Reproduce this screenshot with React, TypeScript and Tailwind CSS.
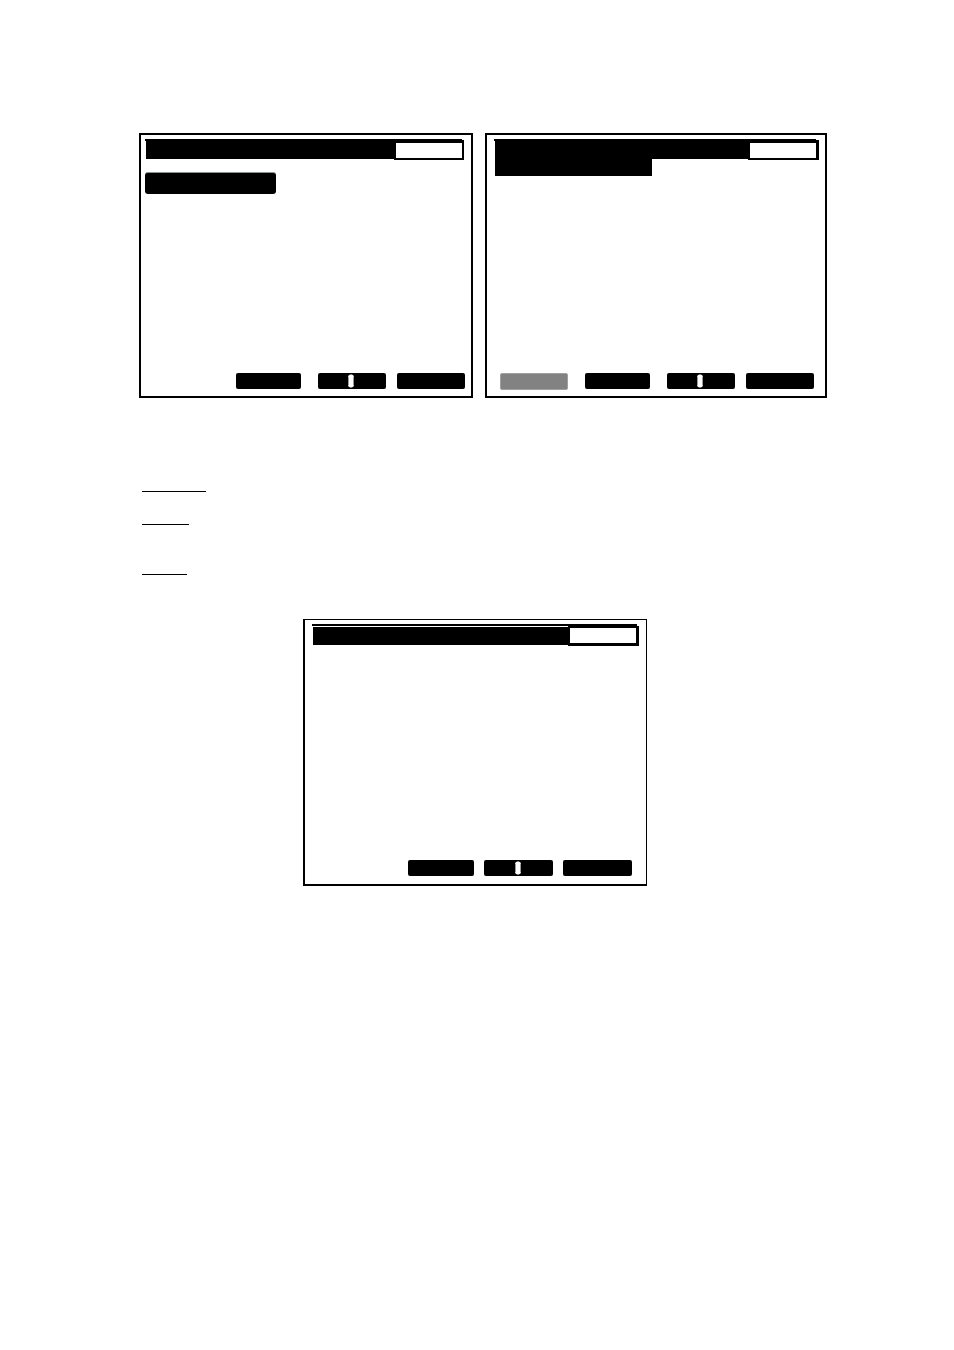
import clsx from "clsx";

type Softkey = {
    label: string;
    className: string;
    slot?: boolean;
    disabled?: boolean;
};

const mainKeys: Softkey[] = [
    { label: "Back", className: "w-[65px] mr-[17px]" },
    { label: "Scroll", className: "w-[68px] mr-[11px]", slot: true },
    { label: "Next", className: "w-[68px]" },
];

const detailKeys: Softkey[] = [
    { label: "Option", className: "w-[68px] mr-[17px]", disabled: true },
    { label: "Back", className: "w-[65px] mr-[17px]" },
    { label: "Scroll", className: "w-[68px] mr-[11px]", slot: true },
    { label: "Next", className: "w-[68px]" },
];

const summaryKeys: Softkey[] = [
    { label: "Back", className: "w-[66px] mr-[10px]" },
    { label: "Scroll", className: "w-[69px] mr-[10px]", slot: true },
    { label: "Next", className: "w-[69px]" },
];

const sections = [
    { id: "first", className: "w-16" },
    { id: "second", className: "w-[47px] mt-8" },
    { id: "third", className: "w-[45px] mt-[49px]" },
];

const Softkeys = ({ keys, className }: { keys: Softkey[]; className: string }) => (
    <div className={clsx("flex justify-end items-start h-4 mt-auto", className)}>
        {keys.map((key) => (
            <button
                key={key.label}
                type="button"
                aria-label={key.label}
                disabled={key.disabled}
                className={clsx(
                    "rounded-[2px] flex items-center justify-center",
                    key.disabled ? "h-[17px] bg-[#828282] border border-[#a0a0a0]" : "h-4 bg-black",
                    key.className
                )}
            >
                {key.slot && (
                    <svg width="6" height="14" viewBox="0 0 6 14" className="mr-[2px]">
                        <path d="M0 2 L2 0.5 H4 L6 2 L5.6 3 V11 L6 12 L4 13.5 H2 L0 12 L0.4 11 V3 Z" fill="white" />
                    </svg>
                )}
            </button>
        ))}
    </div>
);

const App = () => {
    return (
        <main className="min-h-screen bg-white pt-[133px] pl-[139px] pr-[127px]">
            {/* Two screens side by side */}
            <div className="grid grid-cols-[334fr_342fr] gap-3">
                <section className="flex flex-col min-h-[265px] border-2 border-black">
                    <div className="mt-1 ml-1 mr-[9px] h-[2px] bg-black" />
                    <div className="flex items-start -mt-px ml-[5px] mr-[7px]">
                        <div className="flex-1 h-[19px] bg-black" />
                        <div className="w-[70px] h-5 bg-white border-2 border-t-[3px] border-black" />
                    </div>
                    <div className="mt-3 ml-1 w-[131px] h-[22px] rounded-[3px] bg-black border-t border-[#8c9490]" />
                    <Softkeys keys={mainKeys} className="mb-[7px] mr-[6px]" />
                </section>

                <section className="flex flex-col min-h-[265px] border-2 border-black">
                    <div className="mt-1 ml-[7px] mr-[9px] h-[2px] bg-black" />
                    <div className="flex items-start -mt-px ml-2 mr-[6px]">
                        <div className="flex-1 h-[19px] bg-black" />
                        <div className="w-[71px] h-5 bg-white border-2 border-t-[3px] border-r-[3px] border-black" />
                    </div>
                    {/* second title line */}
                    <div className="-mt-px ml-2 w-[157px] h-[17px] bg-black" />
                    <Softkeys keys={detailKeys} className="mb-[7px] mr-[11px]" />
                </section>
            </div>

            {/* Section rules */}
            <div className="mt-[93px] ml-[3px]">
                {sections.map((section) => (
                    <div key={section.id} className={clsx("h-px bg-black", section.className)} />
                ))}
            </div>

            {/* Centered screen */}
            <section className="flex flex-col min-h-[267px] mt-11 ml-[164px] mr-[180px] border-l-2 border-b-2 border-t border-r border-black">
                <div className="mt-1 ml-[7px] mr-[9px] h-[2px] bg-black" />
                <div className="flex items-start ml-2 mr-[7px]">
                    <div className="flex-1 mt-px h-[18px] bg-black" />
                    <div className="w-[71px] h-5 bg-white border-2 border-r-[3px] border-b-[3px] border-black" />
                </div>
                <Softkeys keys={summaryKeys} className="mb-2 mr-[14px]" />
            </section>
        </main>
    );
};

export default App;
